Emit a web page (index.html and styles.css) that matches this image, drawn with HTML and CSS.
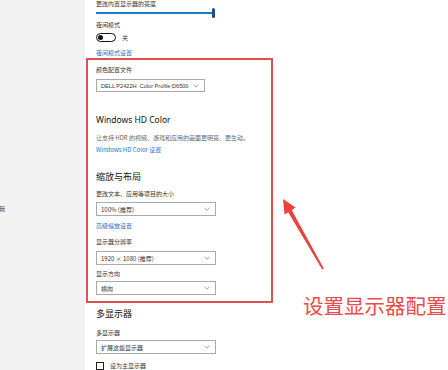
FILE: index.html
```html
<!DOCTYPE html>
<html lang="zh-CN">
<head>
  <meta charset="UTF-8">
  <title>显示设置</title>
  <link rel="stylesheet" href="styles.css">
</head>
<body>
  <div class="window">
    <!-- 左侧导航 -->
    <aside class="sidebar">
      <span class="nav-item">辑</span>
    </aside>

    <main class="content">
      <div class="label brightness">更改内置显示器的亮度</div>
      <div class="slider">
        <span class="slider-track"></span>
        <span class="slider-thumb"></span>
      </div>

      <div class="label night">夜间模式</div>
      <div class="toggle-row">
        <span class="toggle"><span class="toggle-dot"></span></span>
        <span class="toggle-text">关</span>
      </div>
      <div class="link night-link">夜间模式设置</div>

      <!-- 红框标注区域 -->
      <section class="highlight">
        <div class="label">颜色配置文件</div>
        <div class="select select-short">
          <span>DELL P2422H&nbsp; Color Profile;D6500</span>
          <svg class="chev" viewBox="0 0 6 4"><polyline points="0.5,0.8 3,3.2 5.5,0.8"/></svg>
        </div>

        <h2 class="heading hd-title">Windows HD Color</h2>
        <div class="desc">让支持 HDR 的视频、游戏和应用的画面更明亮、更生动。</div>
        <div class="link hd-link">Windows HD Color 设置</div>

        <h2 class="heading scale-title">缩放与布局</h2>
        <div class="label scale-label">更改文本、应用等项目的大小</div>
        <div class="select scale-select">
          <span>100% (推荐)</span>
          <svg class="chev" viewBox="0 0 6 4"><polyline points="0.5,0.8 3,3.2 5.5,0.8"/></svg>
        </div>
        <div class="link adv-link">高级缩放设置</div>

        <div class="label res-label">显示器分辨率</div>
        <div class="select res-select">
          <span>1920 × 1080 (推荐)</span>
          <svg class="chev" viewBox="0 0 6 4"><polyline points="0.5,0.8 3,3.2 5.5,0.8"/></svg>
        </div>

        <div class="label orient-label">显示方向</div>
        <div class="select orient-select">
          <span>横向</span>
          <svg class="chev" viewBox="0 0 6 4"><polyline points="0.5,0.8 3,3.2 5.5,0.8"/></svg>
        </div>
      </section>

      <h2 class="heading multi-title">多显示器</h2>
      <div class="label multi-label">多显示器</div>
      <div class="select multi-select">
        <span>扩展这些显示器</span>
        <svg class="chev" viewBox="0 0 6 4"><polyline points="0.5,0.8 3,3.2 5.5,0.8"/></svg>
      </div>
      <div class="check-row">
        <span class="checkbox"></span>
        <span class="label">设为主显示器</span>
      </div>
    </main>

    <!-- 箭头与说明文字 -->
    <svg class="arrow" viewBox="0 0 448 370">
      <polygon points="283,199 295.5,207.5 291.8,210.2 323.8,268.4 322.2,269.6 288.2,212.2 284.5,214.5"/>
    </svg>
    <div class="note">设置显示器配置</div>
  </div>
</body>
</html>
```

FILE: styles.css
```css
body {
  margin: 0;
  background: #fff;
  font-family: "Noto Sans CJK SC", "Noto Sans", sans-serif;
  color: #222;
}
.window {
  position: relative;
  width: 448px;
  height: 370px;
  overflow: hidden;
  display: flex;
}
.sidebar {
  width: 85px;
  flex: none;
  background: #f2f2f2;
}
.nav-item {
  display: block;
  margin-top: 205px;
  margin-left: -1px;
  font-size: 6px;
  line-height: 8px;
  color: #444;
}
.content {
  flex: 1;
  padding-left: 11px;
}
.label {
  font-size: 6px;
  line-height: 8px;
  color: #333;
  white-space: nowrap;
}
.brightness {
  line-height: 7px;
}
.slider {
  position: relative;
  width: 119px;
  height: 12px;
}
.slider-track {
  position: absolute;
  left: 0;
  right: 2px;
  top: 5px;
  height: 1.5px;
  background: #1a7ccb;
}
.slider-track,
.slider-thumb {
  display: block;
}
.slider-thumb {
  position: absolute;
  right: 0;
  top: 1px;
  width: 3px;
  height: 10px;
  border-radius: 2px;
  background: #1b4f86;
}
.night {
  margin-top: 2px;
}
.toggle-row {
  margin-top: 4px;
  height: 8px;
  display: flex;
  align-items: center;
  gap: 6px;
}
.toggle {
  width: 17px;
  height: 7px;
  border: 1px solid #111;
  border-radius: 5px;
  display: flex;
  align-items: center;
  padding-left: 1px;
}
.toggle-dot {
  width: 5px;
  height: 5px;
  border-radius: 50%;
  background: #111;
}
.toggle-text {
  font-size: 6px;
  color: #333;
}
.link {
  font-size: 6px;
  line-height: 8px;
  color: #1e6fc2;
  white-space: nowrap;
}
.night-link {
  margin-top: 8px;
}
.highlight {
  margin-top: 1px;
  margin-left: -10px;
  width: 187px;
  box-sizing: border-box;
  border: 2px solid #df5050;
  padding: 6px 0 6px 8px;
}
.select {
  margin-top: 5px;
  width: 120px;
  height: 14px;
  box-sizing: border-box;
  border: 1px solid #aaa;
  display: flex;
  align-items: center;
  justify-content: space-between;
  padding: 0 5px 0 4px;
  font-size: 6px;
  color: #333;
  white-space: nowrap;
}
.select-short {
  width: 109px;
  height: 13px;
  font-family: "Liberation Sans", "Noto Sans CJK SC", sans-serif;
  font-size: 5.6px;
}
.chev {
  width: 6px;
  height: 4px;
  fill: none;
  stroke: #777;
  stroke-width: 0.7;
}
.heading {
  margin: 0;
  font-size: 9px;
  line-height: 12px;
  font-weight: normal;
  color: #111;
}
.hd-title {
  margin-top: 22px;
  font-size: 8.5px;
  font-family: "Noto Sans", "Noto Sans CJK SC", sans-serif;
}
.desc {
  margin-top: 8px;
  font-size: 6px;
  line-height: 8px;
  color: #666;
  white-space: nowrap;
}
.hd-link {
  margin-top: 4px;
}
.scale-title {
  margin-top: 17px;
}
.scale-label {
  margin-top: 7px;
}
.scale-select {
  margin-top: 4px;
}
.adv-link {
  margin-top: 6px;
}
.res-label {
  margin-top: 8px;
}
.res-select {
  margin-top: 5px;
}
.orient-label {
  margin-top: 5px;
}
.orient-select {
  margin-top: 3px;
}
.multi-title {
  margin-top: 5px;
}
.multi-label {
  margin-top: 9px;
}
.multi-select {
  margin-top: 3px;
}
.check-row {
  margin-top: 8px;
  display: flex;
  align-items: center;
  gap: 6px;
}
.checkbox {
  width: 8px;
  height: 8px;
  box-sizing: border-box;
  border: 1px solid #222;
}
.arrow {
  position: absolute;
  left: 0;
  top: 0;
  width: 448px;
  height: 370px;
  fill: #e8423f;
}
.note {
  position: absolute;
  left: 303px;
  top: 291px;
  font-size: 20.5px;
  line-height: 28px;
  color: #ea4b4b;
  white-space: nowrap;
}
```
